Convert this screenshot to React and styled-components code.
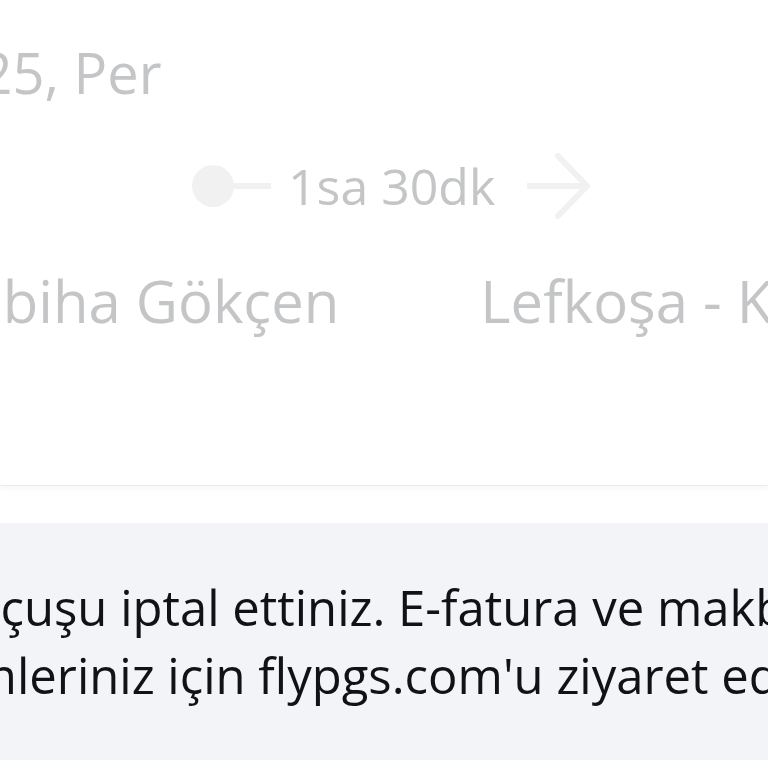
import React from "react";
import styled, { createGlobalStyle } from "styled-components";

const GlobalStyle = createGlobalStyle`
  html, body {
    margin: 0;
    padding: 0;
    background: #ffffff;
  }
  body {
    font-family: "Open Sans", "Noto Sans", sans-serif;
  }
`;

const Screen = styled.div`
  width: 768px;
  height: 768px;
  overflow: hidden;
  background: #ffffff;
`;

const Card = styled.section`
  padding-top: 40px;
  padding-bottom: 154px;
  border-bottom: 1px solid #ececec;
  box-shadow: 0 3px 6px rgba(0, 0, 0, 0.035);
  color: #c4c5c7;
`;

const DateLine = styled.div`
  font-size: 56px;
  line-height: 64px;
  white-space: nowrap;
  margin-left: ${(p) => p.shift}px;
`;

const Timeline = styled.div`
  display: flex;
  align-items: center;
  height: 70px;
  margin-top: 47px;
  padding-left: 192px;
`;

const Dot = styled.span`
  width: 42px;
  height: 42px;
  border-radius: 50%;
  background: #f1f1f2;
  flex-shrink: 0;
`;

const Stub = styled.span`
  width: ${(p) => p.w}px;
  height: 6px;
  background: #f1f1f2;
  flex-shrink: 0;
`;

const Duration = styled.span`
  font-size: 50px;
  line-height: 70px;
  margin: 0 ${(p) => p.after}px 0 17px;
  white-space: nowrap;
`;

const Cities = styled.div`
  display: flex;
  gap: ${(p) => p.gap}px;
  margin-top: 50px;
  font-size: 58px;
  line-height: 60px;
  white-space: nowrap;
`;

const City = styled.span`
  margin-left: ${(p) => p.shift || 0}px;
`;

const Notice = styled.div`
  margin-top: 37px;
  background: #f2f4f7;
  padding: 50px 0 51px;
  color: #111214;
  font-size: 49px;
  line-height: 68px;
`;

const NoticeText = styled.p`
  margin: 0 0 0 ${(p) => p.shift}px;
  white-space: nowrap;
`;

const Arrow = () => (
  <svg width="66" height="70" viewBox="0 0 66 70" fill="none">
    <path
      d="M0 35 H60 M31 5 L60 35 L31 65"
      stroke="#f1f1f2"
      strokeWidth="6"
      strokeLinecap="round"
      strokeLinejoin="round"
    />
  </svg>
);

export default function App() {
  return (
    <Screen>
      <GlobalStyle />
      <Card>
        <DateLine shift={-281}>13 Mar 2025, Per</DateLine>
        <Timeline>
          <Dot />
          <Stub w={37} />
          <Duration after={32}>1sa 30dk</Duration>
          <Arrow />
        </Timeline>
        <Cities gap={141}>
          <City shift={-328}>İstanbul - Sabiha Gökçen</City>
          <City>Lefkoşa - Kıbrıs Ercan</City>
        </Cities>
      </Card>
      <Notice>
        <NoticeText shift={-104}>
          Bu uçuşu iptal ettiniz. E-fatura ve makbuz
          <br />
          işlemleriniz için flypgs.com'u ziyaret edin.
        </NoticeText>
      </Notice>
    </Screen>
  );
}
